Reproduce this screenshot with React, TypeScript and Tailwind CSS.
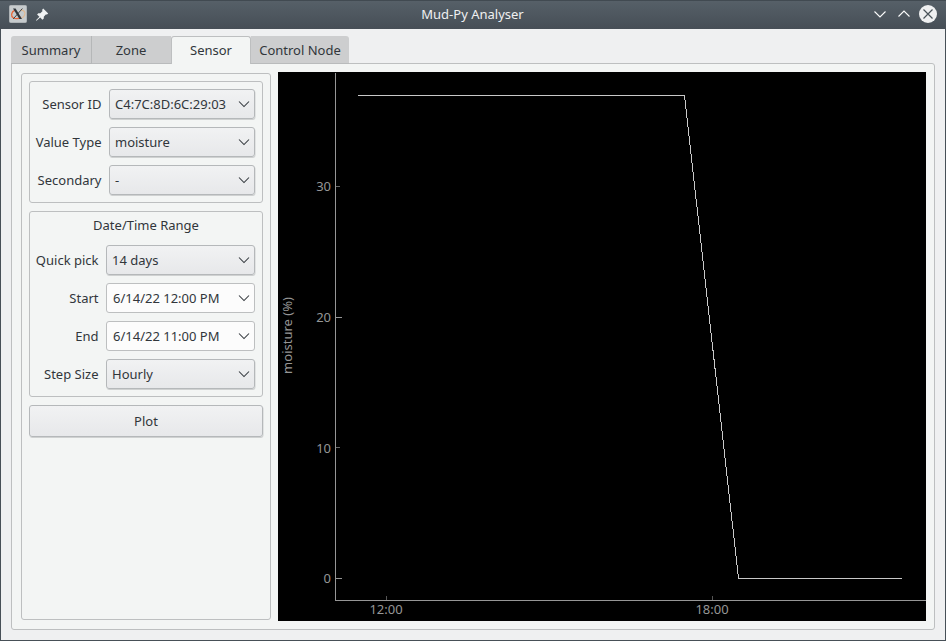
import type { ReactNode } from "react";

function Chevron() {
  return (
    <svg width="12" height="8" viewBox="0 0 12 8" className="shrink-0" fill="none" stroke="#31363b" strokeWidth="1.05">
      <path d="M1 1.5 L6 6.5 L11 1.5" />
    </svg>
  );
}

function Combo({ value }: { value: string }) {
  return (
    <div className="flex h-[30px] min-w-0 flex-1 items-center justify-between rounded-[3px] border border-[#b5b8ba] bg-linear-to-b from-[#f1f2f3] to-[#e7e8ea] pr-[4px] pl-[5px] shadow-[0.5px_1px_0_0_#cfd1d1]">
      <span>{value}</span>
      <Chevron />
    </div>
  );
}

function DateEdit({ value }: { value: string }) {
  return (
    <div className="flex h-[30px] min-w-0 flex-1 items-center justify-between rounded-[3px] border border-[#bdbfc0] bg-[#fcfcfc] pr-[4px] pl-[6px]">
      <span>{value}</span>
      <Chevron />
    </div>
  );
}

function Row({ label, wide, children }: { label: string; wide?: boolean; children: ReactNode }) {
  return (
    <div className="flex items-center">
      <div className={wide ? "mr-[7.5px] w-[71.5px] text-right" : "mr-[7.5px] w-[68.5px] text-right"}>{label}</div>
      {children}
    </div>
  );
}

function TitleBar() {
  return (
    <header className="flex h-[29px] shrink-0 items-center border-t border-[#414a51] bg-linear-to-b from-[#566068] to-[#464e56] pr-[9px] pb-[2px] pl-[9px]">
      <svg width="18" height="18" viewBox="0 0 18 18">
        <rect x="0.5" y="0.5" width="17" height="17" rx="1" fill="#c6cbcd" stroke="#aeb3b6" />
        <path d="M6 5.2 C2 7 1.5 11 4.5 13 C7 14.2 10 13.5 12 12" fill="none" stroke="#e8683a" strokeWidth="1.3" />
        <path d="M11.5 5 C15 4.8 17 7.5 15.5 10.3 C15 11.5 14 12.5 13 12.8" fill="none" stroke="#dfb994" strokeWidth="1.3" />
        <path d="M4 3.5 H6.6 L13 14 H10.4 Z" fill="#30363b" />
        <path d="M13.4 3.5 L4.2 14" stroke="#30363b" strokeWidth="0.9" />
      </svg>
      <svg width="14" height="14" viewBox="0 0 14 14" className="mt-px ml-[8px]" fill="#f0f2f3">
        <path d="M8.2 0.6 L13.2 5.4 L12 6.6 L10.8 6.6 L8.8 8.8 L8.8 10.6 L7.4 11.8 L5.2 9.5 L1.5 12.8 L1 12.3 L4.4 8.7 L2.1 6.5 L3.3 5.2 L5.3 5.2 L7.4 3.2 L7.2 1.8 Z" />
      </svg>
      <div className="flex-1 pl-[23px] text-center leading-[17px] text-[#eff0f1]">Mud-Py Analyser</div>
      <svg width="64" height="18" viewBox="0 0 64 18" fill="none" stroke="#fcfcfc" strokeWidth="1.1">
        <path d="M1.5 6.5 L7 12 L12.5 6.5" />
        <path d="M25.5 11.5 L31 6 L36.5 11.5" />
        <circle cx="55" cy="9" r="9" fill="#eff0f1" stroke="none" />
        <path d="M50.5 4.5 L59.5 13.5 M59.5 4.5 L50.5 13.5" stroke="#4a535a" strokeWidth="1.2" />
      </svg>
    </header>
  );
}

const yTicks = [
  { label: "30", y: 114.5, end: 62, color: "#696969" },
  { label: "20", y: 245.5, end: 64, color: "#969696" },
  { label: "10", y: 375.5, end: 62, color: "#696969" },
  { label: "0", y: 506.5, end: 64, color: "#969696" },
];
const xTicks = [
  { label: "12:00", x: 108.5 },
  { label: "18:00", x: 434.5 },
];

function Chart() {
  return (
    <svg width="648" height="549" viewBox="0 0 648 549" className="shrink-0 bg-black text-[13px]">
      <g shapeRendering="crispEdges" fill="none" stroke="#969696">
        <path d="M57.5 1 V528.5 H648" />
        {yTicks.map((t) => (
          <path key={t.label} d={`M58 ${t.y} H${t.end}`} stroke={t.color} />
        ))}
        {xTicks.map((t) => (
          <path key={t.label} d={`M${t.x} 524 V528`} stroke="#555555" />
        ))}
        <path d="M80 23.5 H406.5 L460.5 506.5 H624" stroke="#c8c8c8" />
      </g>
      <g fill="#969696">
        {yTicks.map((t) => (
          <text key={t.label} x="53" y={t.label === "10" ? 381 : t.y + 4.5} textAnchor="end">{t.label}</text>
        ))}
        {xTicks.map((t) => (
          <text key={t.label} x={t.x - 0.5} y="542" textAnchor="middle">{t.label}</text>
        ))}
        <text transform="translate(14 263.5) rotate(-90)" textAnchor="middle">moisture (%)</text>
      </g>
    </svg>
  );
}

export default function App() {
  return (
    <div className="flex h-[641px] w-[946px] flex-col overflow-hidden bg-[#eff0f1] font-['Noto_Sans',sans-serif] text-[13px] leading-[18px] whitespace-nowrap text-[#31363b]">
      <TitleBar />
      <main className="flex min-h-0 flex-1 flex-col border-x border-b border-[#475057] px-[10px] pt-[7px] pb-[10px]">
        <nav className="z-10 -mb-px flex h-[28px] shrink-0 text-center">
          <div className="flex w-[81px] items-center justify-center rounded-tl-[3px] border-r border-b border-[#b5b7b8] bg-[#cdcecf]">Summary</div>
          <div className="flex w-[79px] items-center justify-center border-b border-[#b9bbbc] bg-[#cdcecf] pr-px">Zone</div>
          <div className="flex w-[80px] items-center justify-center rounded-t-[3px] border-x border-t border-[#bdbfc0] bg-[#f3f5f4] pb-[2px]">Sensor</div>
          <div className="flex w-[98px] items-center justify-center rounded-tr-[3px] border-b border-[#b9bbbc] bg-[#cdcecf]">Control Node</div>
        </nav>
        <section className="flex min-h-0 flex-1 rounded-[3px] rounded-tl-none border border-[#bdbfc0] bg-[#f3f5f4] pt-[8px] pr-[8px] pb-[8px] pl-[9px]">
          <aside className="mt-px mr-[7px] mb-px flex w-[250px] shrink-0 flex-col rounded-[3px] border border-[#bdbfc0] p-[7px]">
            <div className="flex h-[122px] w-[234px] flex-col gap-[8px] rounded-[3px] border border-[#bdbfc0] py-[7px] pr-[7px]">
              <Row label="Sensor ID" wide><Combo value="C4:7C:8D:6C:29:03" /></Row>
              <Row label="Value Type" wide><Combo value="moisture" /></Row>
              <Row label="Secondary" wide><Combo value="-" /></Row>
            </div>
            <div className="mt-[8px] flex h-[186px] w-[234px] flex-col gap-[8px] rounded-[3px] border border-[#bdbfc0] pt-[4px] pr-[7px]">
              <div className="mb-[3px] pl-[7px] text-center">Date/Time Range</div>
              <Row label="Quick pick"><Combo value="14 days" /></Row>
              <Row label="Start"><DateEdit value="6/14/22 12:00 PM" /></Row>
              <Row label="End"><DateEdit value="6/14/22 11:00 PM" /></Row>
              <Row label="Step Size"><Combo value="Hourly" /></Row>
            </div>
            <button className="mt-[8px] flex h-[32px] w-[234px] items-center justify-center rounded-[3px] border border-[#b5b8ba] bg-linear-to-b from-[#f1f2f3] to-[#e7e8ea] shadow-[0.5px_1px_0_0_#cfd1d1]">Plot</button>
          </aside>
          <Chart />
        </section>
      </main>
    </div>
  );
}
